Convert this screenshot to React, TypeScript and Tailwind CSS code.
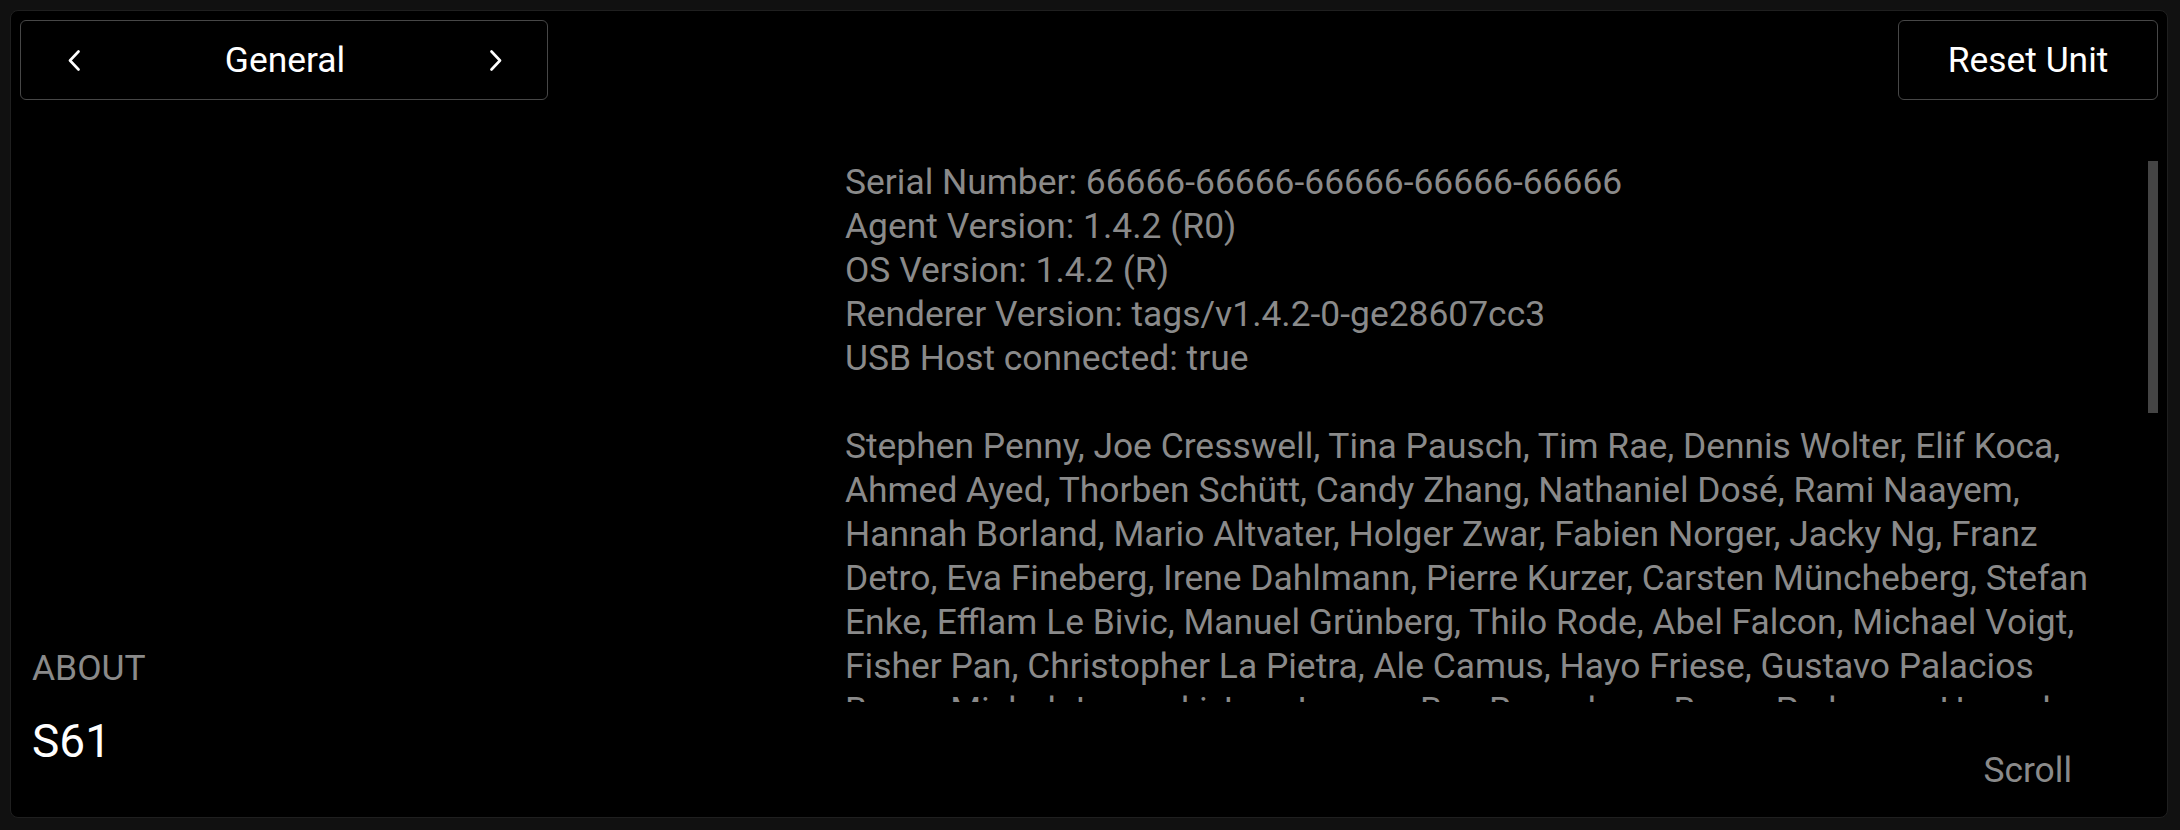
import React from "react";

const infoLines = [
  "Serial Number: 66666-66666-66666-66666-66666",
  "Agent Version: 1.4.2 (R0)",
  "OS Version: 1.4.2 (R)",
  "Renderer Version: tags/v1.4.2-0-ge28607cc3",
  "USB Host connected: true",
];

const nameLines = [
  "Stephen Penny, Joe Cresswell, Tina Pausch, Tim Rae, Dennis Wolter, Elif Koca,",
  "Ahmed Ayed, Thorben Schütt, Candy Zhang, Nathaniel Dosé, Rami Naayem,",
  "Hannah Borland, Mario Altvater, Holger Zwar, Fabien Norger, Jacky Ng, Franz",
  "Detro, Eva Fineberg, Irene Dahlmann, Pierre Kurzer, Carsten Müncheberg, Stefan",
  "Enke, Efflam Le Bivic, Manuel Grünberg, Thilo Rode, Abel Falcon, Michael Voigt,",
  "Fisher Pan, Christopher La Pietra, Ale Camus, Hayo Friese, Gustavo Palacios",
  "Bravo, Michał Jaworski, Ivan Lorenz, Ben Rosenberg, Bruno Pedersen, Hannah",
  "Kramer, Julian Weiss, Lena Hoffmann, Oliver Brandt, Sophie Richter, Max Vogel,",
  "Anna Schubert, Paul Lehmann, Clara Neumann, Jonas Becker, Mia Schröder,",
  "Felix Wagner, Laura Zimmermann, Lukas Hartmann, Emma Krüger, Noah Wolf,",
];

function Chevron({ dir }: { dir: "left" | "right" }) {
  return (
    <svg width="12" height="21" viewBox="0 0 12 21" fill="none">
      {dir === "left" ? (
        <path d="M10.5 1.5 L2 10.5 L10.5 19.5" stroke="#ffffff" strokeWidth="2.6" strokeLinecap="round" strokeLinejoin="round" />
      ) : (
        <path d="M1.5 1.5 L10 10.5 L1.5 19.5" stroke="#ffffff" strokeWidth="2.6" strokeLinecap="round" strokeLinejoin="round" />
      )}
    </svg>
  );
}

export default function App() {
  return (
    <div
      className="w-[2180px] h-[830px] bg-[#111111] pt-[10px] pl-[10px] pr-[12px] pb-[12px]"
      style={{ fontFamily: "Roboto, 'Noto Sans', sans-serif" }}
    >
      <div className="h-full bg-black border border-[#1f1f1f] rounded-[8px] flex flex-col px-[9px] pt-[9px]">
        {/* header */}
        <div className="flex justify-between h-[80px] shrink-0">
          <div className="w-[528px] h-[80px] border border-[#474747] rounded-[6px] flex items-center justify-between pl-[47px] pr-[45px]">
            <Chevron dir="left" />
            <span className="text-[35.4px] leading-[44px] text-white">General</span>
            <Chevron dir="right" />
          </div>
          <div className="w-[260px] h-[80px] border border-[#474747] rounded-[6px] flex items-center justify-center">
            <span className="text-[35.4px] leading-[44px] text-white">Reset Unit</span>
          </div>
        </div>

        {/* body */}
        <div className="flex flex-1 min-h-0">
          <div className="w-[825px] shrink-0 flex flex-col justify-end pl-[12px] pb-[46px]">
            <div className="text-[35.4px] leading-[44px] text-[#8a8a8a]">ABOUT</div>
            <div className="mt-[21px] text-[46px] leading-[60px] text-white">S61</div>
          </div>
          <div className="flex-1 flex flex-col">
            <div className="mt-[60px] h-[542px] relative overflow-hidden">
              <div className="text-[35.4px] leading-[44px] text-[#8a8a8a] whitespace-nowrap">
                {infoLines.map((l) => (
                  <div key={l}>{l}</div>
                ))}
                <div className="h-[44px]" />
                {nameLines.map((l) => (
                  <div key={l}>{l}</div>
                ))}
              </div>
              <div className="absolute right-0 top-[1px] w-[10px] h-[252px] bg-[#444444]" />
            </div>
            <div className="mt-[46px] text-right pr-[86px] text-[35.4px] leading-[44px] text-[#8a8a8a]">
              Scroll
            </div>
          </div>
        </div>
      </div>
    </div>
  );
}
